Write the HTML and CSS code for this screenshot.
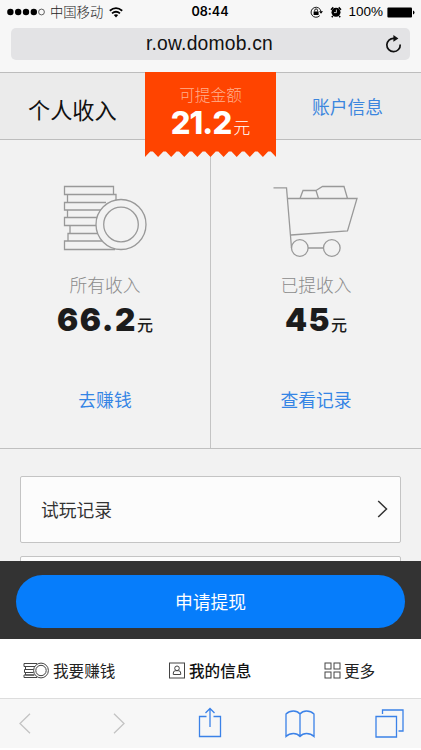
FILE: index.html
```html
<!DOCTYPE html>
<html lang="zh-CN">
<head>
<meta charset="utf-8">
<title>个人收入</title>
<link rel="stylesheet" href="styles.css">
</head>
<body>
<div class="phone">
  <header class="browser">
    <div class="status">
      <div class="status-left">
        <svg width="39" height="8" viewBox="0 0 39 8"><circle cx="3.4" cy="4" r="3.2"/><circle cx="11.2" cy="4" r="3.2"/><circle cx="19" cy="4" r="3.2"/><circle cx="26.8" cy="4" r="3.2"/><circle cx="34.5" cy="4" r="2.9" fill="none" stroke="#222" stroke-width=".7"/></svg>
        <span class="carrier">中国移动</span>
        <svg class="wifi" width="14" height="11" viewBox="0 0 14 11"><path d="M.8 3.8Q7-1.5 13.2 3.8M3 6.4Q7 3 11 6.4" fill="none" stroke="#000" stroke-width="1.8"/><path d="M4.8 8.1Q7 6.4 9.2 8.1L7 10.6Z"/></svg>
      </div>
      <time class="clock">08:44</time>
      <div class="status-right">
        <svg width="13" height="12" viewBox="0 0 13 12"><path d="M9.8 9.6A5 5 0 1 1 11 5.5" fill="none" stroke="#000" stroke-width=".9"/><path d="M9 5.2h4L11 7.8ZM3.6 5.5h5v3.5h-5Z"/><path d="M4.7 5.5V4.3a1.4 1.4 0 0 1 2.8 0v1.2" fill="none" stroke="#000" stroke-width=".9"/></svg>
        <svg class="alarm" width="12" height="12" viewBox="0 0 12 12"><circle cx="6" cy="6.3" r="4.5"/><path d="M1 3.7 3.3 1.4M11 3.7 8.7 1.4M2.8 10 1.8 11.2M9.2 10l1 1.2" stroke="#000" stroke-width="1.5"/><path d="M6.4 3.6v3H4" fill="none" stroke="#f7f7f7" stroke-width=".8"/></svg>
        <span class="percent">100%</span>
        <svg width="28" height="11" viewBox="0 0 28 11"><rect x=".4" y=".6" width="24.6" height="9.8" rx="1"/><path d="M26 3.6q1.5.3 1.5 1.9T26 7.4Z"/></svg>
      </div>
    </div>
    <div class="address">
      <span class="url">r.ow.domob.cn</span>
      <svg class="reload" width="17" height="18" viewBox="0 0 17 18"><path d="M9 3.3A6.7 6.700 0 1 0 15.200 9.5" fill="none" stroke="#111" stroke-width="1.7"/><path d="M8.4 0 13.4 3.5 8.4 6.8Z" fill="#111"/></svg>
    </div>
  </header>

  <main class="page">
    <section class="summary">
      <h1 class="title">个人收入</h1>
      <div class="ticket">
        <div class="ticket-label">可提金额</div>
        <div class="ticket-value"><b>21.2</b><span>元</span></div>
      </div>
      <a class="account">账户信息</a>
    </section>

    <section class="stats">
      <article class="stat">
        <svg class="art" width="86" height="76" viewBox="2 0 86 76" fill="none" stroke="#999" stroke-width="1.3">
          <path d="M4.5 4.5h49v8h-49ZM7.5 12.5H56v6M7.5 12.5v8M46 20.500H4.500v7.500H41M7.500 28v7.500M37 35.500H4.500v8H36M10 43.500v8M37.500 51.500H8v7.500M42 59H4.500v8.500H55"/>
          <circle cx="61" cy="42.500" r="25"/><circle cx="61" cy="42.500" r="17.300"/>
        </svg>
        <div class="stat-label">所有收入</div>
        <div class="stat-value"><b>66.2</b><span>元</span></div>
        <a class="link">去赚钱</a>
      </article>
      <article class="stat cart">
        <svg class="art" width="90" height="76" viewBox="1 0 90 76" fill="none" stroke="#999" stroke-width="1.3">
          <path d="M3.500 5.800H16.500L21.500 66M18 16.500H87L77.500 49 21 53M30 16.500 33 8.500H46L48.500 16.500M46 8.500 52.500 4.500H74L77.500 16.500M38 66H53.500"/>
          <circle cx="29.800" cy="66" r="8.300"/><circle cx="61.800" cy="66" r="8.300"/>
        </svg>
        <div class="stat-label">已提收入</div>
        <div class="stat-value"><b>45</b><span>元</span></div>
        <a class="link">查看记录</a>
      </article>
    </section>

    <section class="records">
      <a class="record"><span>试玩记录</span><svg width="11" height="18" viewBox="0 0 11 18"><path d="M1.200 1 9.500 9 1.200 17" fill="none" stroke="#333" stroke-width="1.500"/></svg></a>
      <a class="record"></a>
    </section>
  </main>

  <footer class="bottom">
    <div class="cta"><button class="withdraw">申请提现</button></div>
    <nav class="tabs">
      <a class="tab earn"><svg width="26" height="17" viewBox="0 0 26 17" fill="none" stroke="#444" stroke-width="1"><path d="M14 1.500H1v3H12M11 4.500H2.500v3h8M10 7.500H1.500v3h9M10 10.500H2.500v2.500h9M11 13H1v2.500H14"/><circle cx="18" cy="8.500" r="7.400"/><circle cx="18" cy="8.500" r="5.200"/></svg><span>我要赚钱</span></a>
      <a class="tab mine"><svg width="16" height="17" viewBox="0 0 16 17" fill="none" stroke="#444" stroke-width="1"><rect x=".5" y="1" width="15" height="15"/><circle cx="8" cy="6.300" r="2.300"/><path d="M4.300 12.500V11Q4.300 8.700 6.600 8.700h2.800Q11.700 8.700 11.700 11v1.500Z"/></svg><span>我的信息</span></a>
      <a class="tab more"><svg width="17" height="17" viewBox="0 0 17 17" fill="none" stroke="#444" stroke-width="1"><rect x="1" y="1" width="6" height="6"/><rect x="10" y="1" width="6" height="6"/><rect x="1" y="10" width="6" height="6"/><rect x="10" y="10" width="6" height="6"/></svg><span>更多</span></a>
    </nav>
    <div class="toolbar">
      <svg class="back" width="12" height="21" viewBox="0 0 12 21"><path d="M11 .8 1 10.500 11 20.200" fill="none" stroke="#c3c3c3" stroke-width="1.300"/></svg>
      <svg class="forward" width="12" height="21" viewBox="0 0 12 21"><path d="M1 .8 11 10.500 1 20.200" fill="none" stroke="#c3c3c3" stroke-width="1.300"/></svg>
      <svg class="share" width="24" height="31" viewBox="0 0 24 31"><path d="M8.500 9.500H1.500V29.500H22.500V9.500H15.500M12 20V1.500M7.500 6 12 1.500 16.500 6" fill="none" stroke="#3b82e8" stroke-width="1.300"/></svg>
      <svg class="book" width="30" height="28" viewBox="0 0 30 28"><path d="M15 4Q12.500 1 8.500 1 4 1 1 4V26.500Q4 23.500 8.500 23.500 12.500 23.500 15 26.500 17.500 23.500 21.500 23.500 26 23.500 29 26.500V4Q26 1 21.500 1 17.500 1 15 4V26.500" fill="none" stroke="#3b82e8" stroke-width="1.300"/></svg>
      <svg class="windows" width="29" height="29" viewBox="0 0 29 29"><path d="M1 7.500H21.500V28H1ZM7.500 5V1H28V22H23.500" fill="none" stroke="#3b82e8" stroke-width="1.300"/></svg>
    </div>
  </footer>
</div>
</body>
</html>
```

FILE: styles.css
```css
* { box-sizing: border-box; }
body { margin: 0; font-family: "Noto Sans CJK SC", sans-serif; }
svg { display: block; flex: none; }
.phone { width: 421px; height: 750px; overflow: hidden; display: flex; flex-direction: column; background: #f2f2f2; }

.browser { flex: none; height: 72px; background: #f7f7f7; }
.status { height: 24px; display: grid; grid-template-columns: 1fr auto 1fr; align-items: center; padding: 0 6px 0 7px; }
.status-left, .status-right { display: flex; align-items: center; }
.status-right { justify-content: flex-end; }
.carrier { margin-left: 4px; font-size: 13.3px; line-height: 20px; color: #222; font-weight: 300; }
.wifi { margin-left: 6px; }
.clock { padding-right: 2px; font: 600 12.6px/20px Inter, sans-serif; }
.alarm { margin-left: 7px; }
.percent { margin: 0 4px 0 6px; font: 13.5px/20px "Liberation Sans", sans-serif; }
.address { height: 32px; margin: 4px 11px 0; padding: 0 8px 0 135px; border-radius: 5px; background: #e3e3e5; display: flex; align-items: center; justify-content: space-between; }
.url { font: 19.3px/30px "Liberation Sans", sans-serif; letter-spacing: .2px; color: #111; }

.page { flex: none; height: 489px; overflow: hidden; }
.summary { height: 68px; display: grid; grid-template-columns: 145px 131px 145px; border: solid #bdbdbd; border-width: 1px 0; background: #ebebeb; }
.title { margin: 0; padding: 20px 0 0 28px; font-size: 22.2px; line-height: 32px; font-weight: 400; color: #111; }
.ticket { position: relative; z-index: 1; height: 85px; margin-top: -1px; padding-top: 12px; color: #fff; background: #ff4400; text-align: center; clip-path: polygon(0 0, 100% 0, 100% 100%, 96% 93.500%, 94% 93.500%, 90% 100%, 86% 93.500%, 84% 93.500%, 80% 100%, 76% 93.500%, 74% 93.500%, 70% 100%, 66% 93.500%, 64% 93.500%, 60% 100%, 56% 93.500%, 54% 93.500%, 50% 100%, 46% 93.500%, 44% 93.500%, 40% 100%, 36% 93.500%, 34% 93.500%, 30% 100%, 26% 93.500%, 24% 93.500%, 20% 100%, 16% 93.500%, 14% 93.500%, 10% 100%, 6% 93.500%, 4% 93.500%, 0 100%); }
.ticket-label { font-size: 15.700px; line-height: 21px; font-weight: 300; color: #ffb08f; }
.ticket-value { display: flex; align-items: baseline; justify-content: center; line-height: 36px; }
.ticket-value b { font: 800 31px/36px Inter, sans-serif; letter-spacing: -.9px; }
.ticket-value span { font-size: 17px; font-weight: 300; margin-left: 2px; }
.account { padding: 19px 0 0 36px; font-size: 17.800px; line-height: 28px; font-weight: 400; color: #3c86de; }

.stats { height: 309px; display: grid; grid-template-columns: 211px 210px; border-bottom: 1px solid #c0c0c0; }
.stat { padding-top: 42px; display: flex; flex-direction: column; align-items: center; border-right: 1px solid #c4c4c4; }
.cart { border-right: 0; }
.art { height: 76px; }
.stat-label { margin-top: 13px; font-size: 17.800px; line-height: 26px; font-weight: 300; color: #8c8c8c; }
.stat-value { display: flex; align-items: baseline; height: 40px; margin-top: 3px; color: #1c1c1c; }
.stat-value b { font: 900 31.500px/40px Inter, sans-serif; letter-spacing: 1.500px; }
.stat-value span { font-size: 16px; line-height: 30px; font-weight: 500; }
.link { margin-top: 46px; font-size: 17.800px; line-height: 26px; color: #3585e5; font-weight: 400; }

.records { padding: 27px 20px 0; display: flex; flex-direction: column; gap: 13px; }
.record { height: 67px; padding: 0 12px 2px 20px; border: 1px solid #c4c4c4; border-radius: 2px; background: #fcfcfc; display: flex; align-items: center; justify-content: space-between; font-size: 17.800px; color: #333; }

.bottom { flex: none; height: 189px; background: #fff; }
.cta { height: 78px; padding: 14px 16px 11px; background: #333; }
.withdraw { display: block; width: 389px; height: 53px; border: 0; padding: 0; border-radius: 27px; background: #067dfb; color: #fff; font: 400 17.800px/53px "Noto Sans CJK SC", sans-serif; }
.tabs { height: 59px; display: grid; grid-template-columns: 140px 140px 141px; align-items: center; padding-top: 4px; }
.tab { display: flex; align-items: center; gap: 4px; font-size: 15.600px; line-height: 24px; color: #222; }
.tab span { margin-top: -1px; }
.earn { padding-left: 23px; }
.mine { padding-left: 29px; font-weight: 500; color: #111; }
.more { padding-left: 44px; gap: 3px; }
.toolbar { height: 50px; display: grid; grid-template-columns: 80px 100px 96px 89px 56px; align-items: center; border-top: 1px solid #ddd; background: #f7f7f7; }
.back { margin-left: 19px; }
.forward { margin-left: 33px; }
.share { margin-left: 18px; margin-top: -2px; }
.book { margin-left: 9px; }
.windows { margin-left: 10px; }
```
